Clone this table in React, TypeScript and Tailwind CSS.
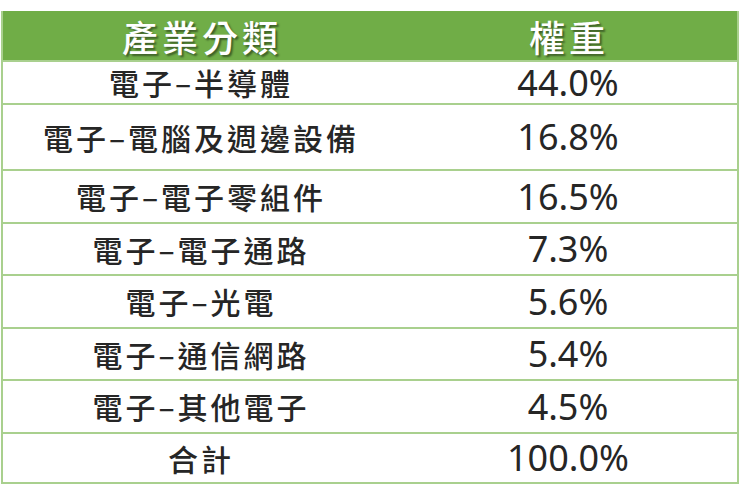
import React from "react";

const rows: { name: string; w: string; h: string }[] = [
  { name: "電子–半導體", w: "44.0%", h: "h-[43px]" },
  { name: "電子–電腦及週邊設備", w: "16.8%", h: "h-[66px]" },
  { name: "電子–電子零組件", w: "16.5%", h: "h-[53px]" },
  { name: "電子–電子通路", w: "7.3%", h: "h-[52px]" },
  { name: "電子–光電", w: "5.6%", h: "h-[53px]" },
  { name: "電子–通信網路", w: "5.4%", h: "h-[52px]" },
  { name: "電子–其他電子", w: "4.5%", h: "h-[53px]" },
  { name: "合計", w: "100.0%", h: "h-[52px]" },
];

export default function App() {
  return (
    <div className="w-[740px] h-[498px] bg-white pt-[11px] pl-[1px]">
      <div className="w-[738px] border-x-2 border-[#a9d08e]">
        <div className="flex h-[49px] bg-[#70ad47] text-white [text-shadow:2px_2px_2px_rgba(0,0,0,0.45)] font-['Noto_Sans_CJK_TC',sans-serif] text-[36px] tracking-[4px] font-medium">
          <div className="w-[398px] flex items-center justify-center">產業分類</div>
          <div className="flex-1 flex items-center justify-center">權重</div>
        </div>
        {rows.map((r) => (
          <div
            key={r.name}
            className={`flex ${r.h} border-t-2 border-[#a9d08e] text-[#262626] ${r.name === "合計" ? "border-b-2" : ""}`}
          >
            <div className="w-[396px] flex items-center justify-center font-['Noto_Sans_CJK_TC',sans-serif] text-[30px] tracking-[3px] font-medium">
              {r.name}
            </div>
            <div className="flex-1 flex items-center justify-center font-['Noto_Sans',sans-serif] text-[36px]">
              {r.w}
            </div>
          </div>
        ))}
      </div>
    </div>
  );
}
